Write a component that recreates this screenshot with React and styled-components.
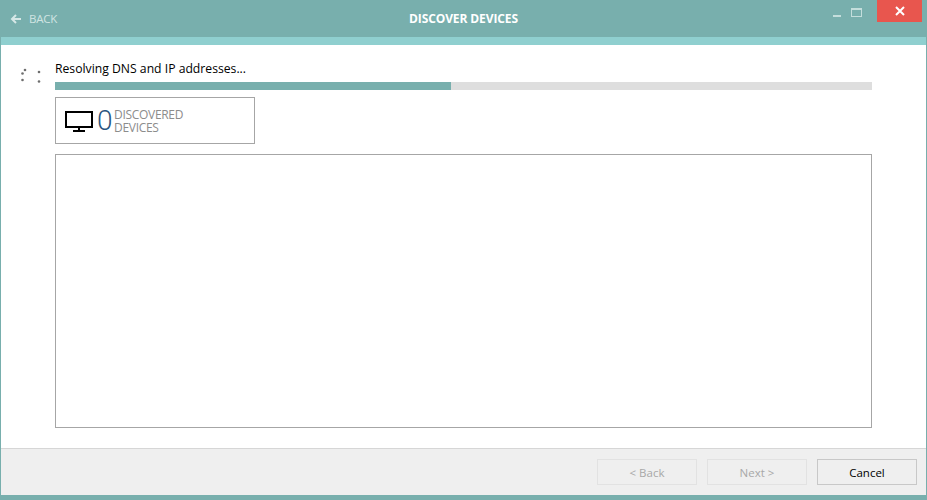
import React from 'react'
import styled, { createGlobalStyle } from 'styled-components'

const GlobalStyle = createGlobalStyle`
  html, body {
    margin: 0;
    padding: 0;
    height: 100%;
    background: #fff;
  }
  #root {
    height: 100%;
  }
`

const Window = styled.div`
  display: flex;
  flex-direction: column;
  width: 927px;
  height: 500px;
  box-sizing: border-box;
  border-left: 1px solid #78afad;
  border-right: 1px solid #78afad;
  border-bottom: 5px solid #78afad;
  font-family: 'Open Sans', 'Noto Sans', sans-serif;
  overflow: hidden;
`

const TitleBar = styled.header`
  display: grid;
  grid-template-columns: 1fr auto 1fr;
  align-items: start;
  height: 37px;
  flex: none;
  margin: 0 -1px;
  background: #78afad;
`

const BackLink = styled.div`
  display: flex;
  align-items: center;
  gap: 8px;
  height: 37px;
  padding-left: 10px;
  color: #d0e4e2;
  font-size: 11.5px;
  letter-spacing: -0.2px;
`

const Title = styled.h1`
  margin: 0;
  line-height: 37px;
  color: #fff;
  font-size: 12px;
  font-weight: 700;
  letter-spacing: -0.1px;
`

const WindowControls = styled.div`
  display: flex;
  justify-self: end;
  align-items: flex-start;
  margin-right: 5px;
`

const ControlButton = styled.div`
  display: flex;
  align-items: flex-start;
  justify-content: center;
  box-sizing: border-box;
  width: ${p => p.$width}px;
  height: 22px;
  padding-top: ${p => p.$top}px;
  margin-right: ${p => p.$gap || 0}px;
  background: ${p => p.$bg || 'transparent'};
`

const AccentStrip = styled.div`
  height: 8px;
  flex: none;
  background: #8fcfcf;
`

const Content = styled.main`
  flex: 1;
  display: grid;
  grid-template-columns: 54px 817px;
  align-content: start;
  background: #fff;
`

const SpinnerCell = styled.div`
  padding: 22px 0 0 20px;
`

const Body = styled.div`
  display: flex;
  flex-direction: column;
  padding-top: 16px;
`

const Status = styled.div`
  height: 21px;
  line-height: 16px;
  color: #000;
  font-size: 12.2px;
`

const Track = styled.div`
  height: 8px;
  background: #dedede;
`

const Fill = styled.div`
  height: 100%;
  background: #78afad;
`

const StatBox = styled.div`
  display: flex;
  align-items: center;
  box-sizing: border-box;
  width: 200px;
  height: 47px;
  margin-top: 7px;
  padding-left: 9px;
  border: 1px solid #a6a6a6;
`

const MonitorIcon = styled.svg`
  flex: none;
  margin-top: 1px;
`

const Count = styled.span`
  width: 16px;
  margin-left: 4px;
  color: #2a5580;
  font-family: Roboto, 'Open Sans', sans-serif;
  font-size: 28px;
  font-weight: 300;
  line-height: 1;
`

const StatLabel = styled.span`
  margin-left: 1px;
  color: #8c8c8c;
  font-size: 12px;
  line-height: 13px;
  letter-spacing: -0.3px;
`

const DeviceList = styled.div`
  box-sizing: border-box;
  height: 274px;
  margin-top: 10px;
  border: 1px solid #a6a6a6;
`

const Footer = styled.footer`
  display: flex;
  justify-content: flex-end;
  gap: 10px;
  box-sizing: border-box;
  height: 47px;
  flex: none;
  padding: 10px 9px 0 0;
  border-top: 1px solid #d6d6d6;
  background: #efefef;
`

const FooterButton = styled.button`
  box-sizing: border-box;
  width: 100px;
  height: 26px;
  padding: 0;
  border: 1px solid ${p => (p.disabled ? '#e2e2e2' : '#c8c8c8')};
  background: #efefef;
  color: ${p => (p.disabled ? '#a8a8a8' : '#000')};
  font-family: inherit;
  font-size: 11.5px;
`

const Spinner = () => (
  <svg width="22" height="16" viewBox="0 0 22 16" fill="#6e6e6e">
    <circle cx="4" cy="2" r="1.3" />
    <circle cx="1.5" cy="5.5" r="1.3" />
    <circle cx="1.5" cy="12" r="1.3" />
    <circle cx="18" cy="4" r="1.3" />
    <circle cx="18" cy="13.5" r="1.3" />
  </svg>
)

const Monitor = () => (
  <MonitorIcon width="28" height="21" viewBox="0 0 28 21" fill="none" stroke="#000" strokeWidth="2">
    <rect x="1" y="1" width="26" height="15" />
    <path d="M14 17v3" />
    <path d="M8 20h12" />
  </MonitorIcon>
)

const App = () => {
  return (
    <Window>
      <GlobalStyle />
      <TitleBar>
        <BackLink>
          <svg width="11" height="10" viewBox="0 0 11 10" fill="none" stroke="#d6e7e6" strokeWidth="2">
            <path d="M11 5H2M6 1 2 5l4 4" />
          </svg>
          BACK
        </BackLink>
        <Title>DISCOVER DEVICES</Title>
        <WindowControls>
          <ControlButton $width={16} $top={15}>
            <svg width="8" height="2" viewBox="0 0 8 2">
              <rect width="8" height="2" fill="#c4dedc" />
            </svg>
          </ControlButton>
          <ControlButton $width={23} $top={8} $gap={9}>
            <svg width="11" height="9" viewBox="0 0 11 9" fill="none" stroke="#c4dedc">
              <rect x="0.5" y="0.5" width="10" height="8" />
              <path d="M0 1.5h11" />
            </svg>
          </ControlButton>
          <ControlButton $width={45} $top={6} $bg="#e8564e">
            <svg width="10" height="10" viewBox="0 0 10 10" stroke="#fff" strokeWidth="2">
              <path d="M1 1l8 8M9 1l-8 8" />
            </svg>
          </ControlButton>
        </WindowControls>
      </TitleBar>
      <AccentStrip />
      <Content>
        <SpinnerCell>
          <Spinner />
        </SpinnerCell>
        <Body>
          <Status>Resolving DNS and IP addresses...</Status>
          <Track>
            <Fill style={{ width: '48.5%' }} />
          </Track>
          <StatBox>
            <Monitor />
            <Count>0</Count>
            <StatLabel>
              DISCOVERED
              <br />
              DEVICES
            </StatLabel>
          </StatBox>
          <DeviceList />
        </Body>
      </Content>
      <Footer>
        <FooterButton disabled>&lt; Back</FooterButton>
        <FooterButton disabled>Next &gt;</FooterButton>
        <FooterButton>Cancel</FooterButton>
      </Footer>
    </Window>
  )
}

export default App
